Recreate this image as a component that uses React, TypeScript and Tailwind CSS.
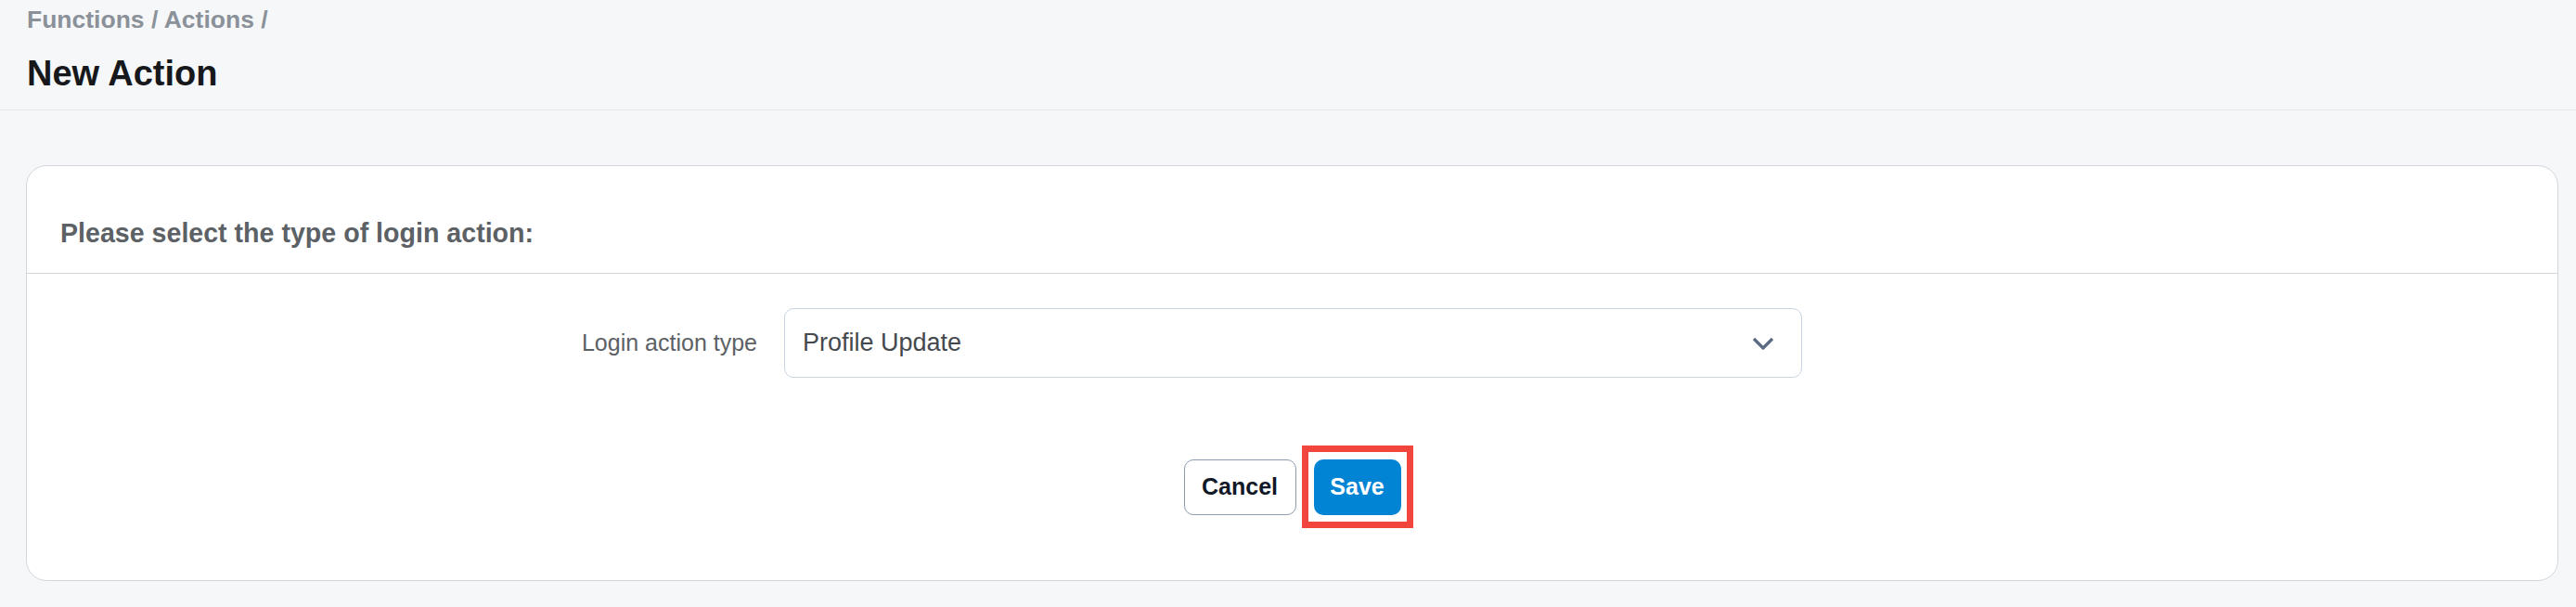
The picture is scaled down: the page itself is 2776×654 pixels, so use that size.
import { useState } from 'react'

export default function App() {
  const [actionType] = useState('Profile Update')

  return (
    <div className="min-h-screen bg-[#f6f7f9] font-['Liberation_Sans',Arial,sans-serif]">
      <header className="border-b border-[#e4e6ea] px-[29px] pt-[6px] pb-[18px]">
        <p className="text-[26.5px] leading-[30px] font-bold text-[#8b9199]">Functions / Actions /</p>
        <h1 className="mt-[22px] text-[38px] leading-[42px] font-bold text-[#16181b]">New Action</h1>
      </header>

      <main className="pt-[59px] pl-[28px] pr-[19px]">
        <div className="rounded-[22px] border border-[#d3d6db] bg-white">
          <div className="border-b border-[#d3d6db] px-[36px] pt-[56px] pb-[27px]">
            <h2 className="text-[28.6px] leading-[32px] font-bold text-[#5c6166]">
              Please select the type of login action:
            </h2>
          </div>

          <div className="pt-[37px] pb-[70px]">
            <div className="flex items-center">
              <label className="w-[816px] pr-[29px] text-right text-[25px] text-[#5c6166]">
                Login action type
              </label>
              <div className="flex h-[75px] w-[1097px] items-center justify-between rounded-[10px] border border-[#c9d5e3] pl-[19px] pr-[29px]">
                <span className="text-[27px] text-[#45494e]">{actionType}</span>
                <svg width="24" height="14" viewBox="0 0 24 14" fill="none">
                  <polyline
                    points="2,2 12,12 22,2"
                    stroke="#5b6b82"
                    strokeWidth="3.2"
                    strokeLinejoin="round"
                  />
                </svg>
              </div>
            </div>

            <div className="mt-[88px] flex justify-center gap-[19px]">
              <button className="h-[60px] w-[121px] rounded-[10px] border-[1.5px] border-[#8d9bb1] bg-white text-[25px] font-bold text-[#111827]">
                Cancel
              </button>
              <span className="relative">
                <button className="h-[60px] w-[94px] rounded-[10px] bg-[#0284d4] text-[25px] font-bold text-white">
                  Save
                </button>
                <span className="pointer-events-none absolute -top-[15px] -bottom-[14px] -left-[13px] -right-[13px] border-[7px] border-[#f2453d]" />
              </span>
            </div>
          </div>
        </div>
      </main>
    </div>
  )
}
